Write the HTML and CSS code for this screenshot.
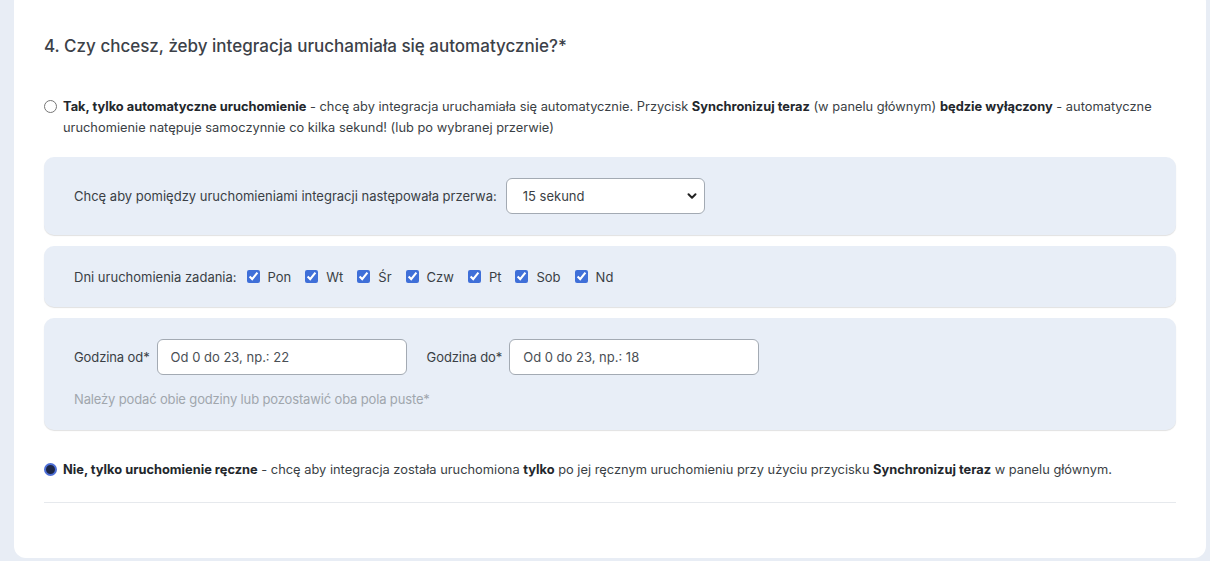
FILE: index.html
```html
<!DOCTYPE html>
<html lang="pl">
<head>
<meta charset="utf-8">
<title>Integracja</title>
<link rel="stylesheet" href="styles.css">
</head>
<body>
<div class="card">
  <h2 class="question">4. Czy chcesz, żeby integracja uruchamiała się automatycznie?*</h2>

  <label class="option">
    <input type="radio" name="mode" class="radio">
    <span class="option-text"><b>Tak, tylko automatyczne uruchomienie</b> - chcę aby integracja uruchamiała się automatycznie. Przycisk <b>Synchronizuj teraz</b> (w panelu głównym) <b>będzie wyłączony</b> - automatyczne uruchomienie natępuje samoczynnie co kilka sekund! (lub po wybranej przerwie)</span>
  </label>

  <div class="panel panel-interval">
    <span class="label">Chcę aby pomiędzy uruchomieniami integracji następowała przerwa:</span>
    <div class="select-wrap">
      <select class="select">
        <option>15 sekund</option>
      </select>
      <svg class="chevron" width="10" height="8" viewBox="0 0 10 8"><path d="M1.5 2.2 L5 5.7 L8.5 2.2" fill="none" stroke="#222" stroke-width="2" stroke-linecap="round" stroke-linejoin="round"/></svg>
    </div>
  </div>

  <div class="panel panel-days">
    <span class="label">Dni uruchomienia zadania:</span>
    <label class="day"><input type="checkbox" checked><span>Pon</span></label>
    <label class="day"><input type="checkbox" checked><span>Wt</span></label>
    <label class="day"><input type="checkbox" checked><span>Śr</span></label>
    <label class="day"><input type="checkbox" checked><span>Czw</span></label>
    <label class="day"><input type="checkbox" checked><span>Pt</span></label>
    <label class="day"><input type="checkbox" checked><span>Sob</span></label>
    <label class="day"><input type="checkbox" checked><span>Nd</span></label>
  </div>

  <div class="panel panel-hours">
    <div class="hours-row">
      <label class="field"><span class="label">Godzina od*</span><input class="input" type="text" placeholder="Od 0 do 23, np.: 22"></label>
      <label class="field"><span class="label">Godzina do*</span><input class="input" type="text" placeholder="Od 0 do 23, np.: 18"></label>
    </div>
    <p class="hint">Należy podać obie godziny lub pozostawić oba pola puste*</p>
  </div>

  <label class="option option-manual">
    <input type="radio" name="mode" class="radio" checked>
    <span class="option-text"><b>Nie, tylko uruchomienie ręczne</b> - chcę aby integracja została uruchomiona <b>tylko</b> po jej ręcznym uruchomieniu przy użyciu przycisku <b>Synchronizuj teraz</b> w panelu głównym.</span>
  </label>

  <hr class="divider">
</div>
</body>
</html>
```
FILE: styles.css
```css
* { box-sizing: border-box; }
html, body { margin: 0; padding: 0; }
body {
  background: #e8edf5;
  font-family: "Inter", "Noto Sans", sans-serif;
  font-size: 13px;
  color: #3a3f45;
  height: 561px;
  overflow: hidden;
}
.card {
  background: #fff;
  margin: -10px 4px 0 14px;
  border-radius: 12px;
  padding: 40px 30px 55px 30px;
}
.question {
  margin: 0;
  font-size: 17px;
  font-weight: 500;
  line-height: 32px;
  color: #3c4148;
}
.option {
  display: flex;
  align-items: flex-start;
  gap: 6px;
  margin-top: 34px;
  line-height: 21px;
}
.option-text { font-size: 12.85px; }
.option b { font-weight: 700; color: #23272c; }
.radio {
  appearance: none;
  -webkit-appearance: none;
  margin: 4px 0 0 0;
  width: 13px;
  height: 13px;
  border: 1px solid #767676;
  border-radius: 50%;
  flex: none;
  background: #fff;
}
.radio:checked {
  border: 2px solid #4e6fd6;
  background: #1d2747;
}
.panel {
  background: #e8eef7;
  border-radius: 10px;
  box-shadow: 0 1px 1px rgba(0, 0, 0, 0.12);
  padding: 0 30px;
}
.panel-interval {
  margin-top: 19px;
  display: flex;
  align-items: center;
  gap: 9px;
  height: 78px;
}
.select-wrap { position: relative; }
.select {
  appearance: none;
  -webkit-appearance: none;
  width: 199px;
  height: 36px;
  border: 1px solid #a3aab3;
  border-radius: 6px;
  background: #fff;
  font: inherit;
  color: #3a3f45;
  padding: 0 16px;
}
.chevron {
  position: absolute;
  right: 8px;
  top: 14px;
  pointer-events: none;
}
.panel-days {
  margin-top: 11px;
  height: 61px;
  display: flex;
  align-items: center;
}
.panel-days .label { margin-right: 10px; }
.day {
  display: flex;
  align-items: center;
  gap: 8px;
  margin-right: 14px;
}
.day input {
  margin: 0;
  width: 13px;
  height: 13px;
  accent-color: #3f6fd8;
}
.panel-hours {
  margin-top: 11px;
  padding-top: 21px;
  padding-bottom: 21px;
}
.hours-row {
  display: flex;
  gap: 20px;
}
.field {
  display: flex;
  align-items: center;
  gap: 7px;
}
.field .label { letter-spacing: -0.1px; }
.input {
  width: 250px;
  height: 36px;
  border: 1px solid #a3aab3;
  border-radius: 6px;
  background: #fff;
  font: inherit;
  padding: 0 13px;
}
.input::placeholder { color: #4a4f55; }
.hint {
  margin: 14px 0 0 0;
  color: #a0a6ad;
  line-height: 20px;
  letter-spacing: -0.15px;
}
.option-manual { margin-top: 29px; }
.divider {
  margin: 22px 0 0 0;
  border: 0;
  border-top: 1px solid #e6e9ed;
}
```
